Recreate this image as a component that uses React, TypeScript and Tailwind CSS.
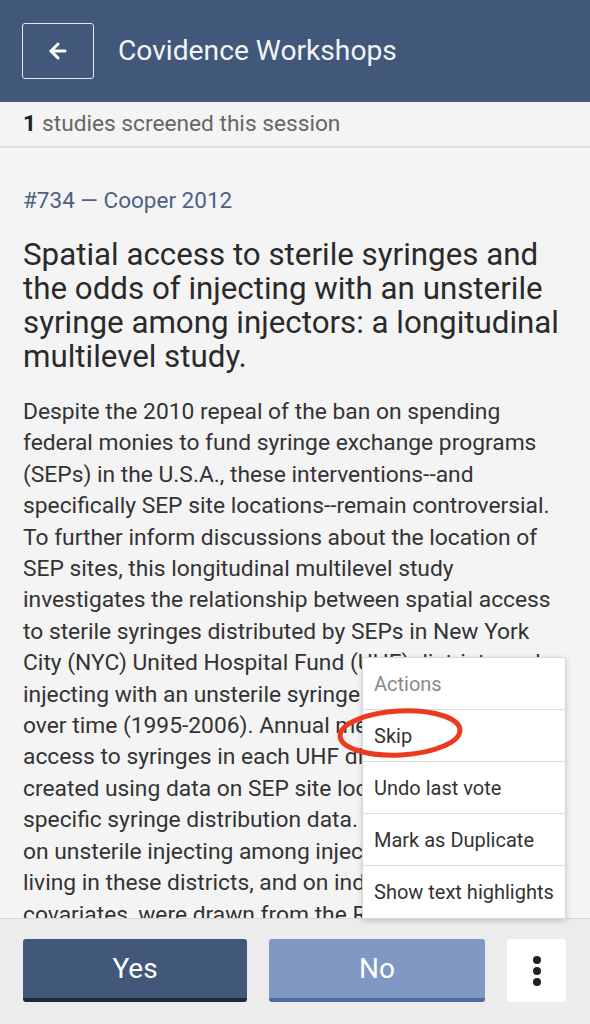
import React from "react";
import { ArrowLeft } from "lucide-react";

const abstractStart =
  "Despite the 2010 repeal of the ban on spending federal monies to fund syringe exchange programs (SEPs) in the U.S.A., these interventions--and specifically SEP site locations--remain controversial. To further inform discussions about the location of SEP sites, this longitudinal multilevel study investigates the relationship between spatial access to sterile syringes distributed by SEPs in New York City (NYC) United Hospital Fund (UHF) districts and injecting with an unsterile syringe among injectors over time (1995-2006). Annual measures of spatial access to syringes in each UHF district were";
const abstractEnd =
  "created using data on SEP site locations and SEP-specific syringe distribution data. Individual-level data on unsterile injecting among injection drug users living in these districts, and on individual-level covariates, were drawn from the Risk Factors study.";

const menuItems = ["Skip", "Undo last vote", "Mark as Duplicate", "Show text highlights"];

function ActionsMenu() {
  return (
    <div className="absolute right-[24px] bottom-[105px] w-[204px] bg-white border border-[#d8d8d8] shadow-[0_2px_6px_rgba(0,0,0,0.18)] z-20">
      <div className="h-[52px] flex items-center px-[11px] text-[20px] text-[#8a8a8a] border-b border-[#dcdcdc] whitespace-nowrap">
        Actions
      </div>
      {menuItems.map((item, i) => (
        <div
          key={item}
          className={
            "h-[52px] flex items-center px-[11px] text-[20px] text-[#333] whitespace-nowrap " +
            (i < menuItems.length - 1 ? "border-b border-[#dcdcdc]" : "")
          }
        >
          {item}
        </div>
      ))}
    </div>
  );
}

function App() {
  return (
    <div
      className="relative h-[1024px] w-full flex flex-col bg-[#f4f4f4] overflow-hidden"
      style={{ fontFamily: "Roboto, 'Liberation Sans', sans-serif" }}
    >
      {/* header */}
      <div className="h-[102px] shrink-0 bg-[#41587a] flex items-center px-[22px] gap-[24px]">
        <button className="w-[72px] h-[56px] border-[1.5px] border-[#e6e9ef] rounded-[3px] flex items-center justify-center text-white">
          <ArrowLeft size={24} strokeWidth={3} />
        </button>
        <h1 className="text-[28.2px] text-[#f2f4f7] font-normal">Covidence Workshops</h1>
      </div>

      {/* session counter */}
      <div className="h-[46px] shrink-0 flex items-center px-[23px] border-b-2 border-[#dedede] text-[22.7px] text-[#666]">
        <span className="font-bold text-[#222] mr-[6px]">1</span>
        studies screened this session
      </div>

      {/* study */}
      <div className="flex-1 overflow-hidden px-[23px] pt-[38px]">
        <p className="text-[22.5px] text-[#4d6283] leading-[28px]">#734 — Cooper 2012</p>
        <h2 className="mt-[24px] text-[31.3px] leading-[34px] text-[#2a2a2a]">
          Spatial access to sterile syringes and the odds of injecting with an unsterile syringe
          among injectors: a longitudinal multilevel study.
        </h2>
        <p className="mt-[22px] text-[22.8px] leading-[31.4px] text-[#333]">
          {abstractStart}
          <br />
          {abstractEnd}
        </p>
      </div>

      {/* vote bar */}
      <div className="h-[106px] shrink-0 bg-[#ececec] border-t border-[#d6d6d6] flex items-start gap-[22px] px-[23px] pt-[20px]">
        <button className="w-[224px] h-[63px] rounded-[3px] bg-[#41587a] border-b-[4px] border-[#1f2a38] text-white text-[28px]">
          Yes
        </button>
        <button className="w-[216px] h-[63px] rounded-[3px] bg-[#7f98c4] border-b-[4px] border-[#4f6aa3] text-white text-[28px]">
          No
        </button>
        <button className="w-[59px] h-[63px] rounded-[3px] bg-white flex flex-col items-center justify-center gap-[3px]">
          <span className="w-[8px] h-[8px] rounded-full bg-[#222]" />
          <span className="w-[8px] h-[8px] rounded-full bg-[#222]" />
          <span className="w-[8px] h-[8px] rounded-full bg-[#222]" />
        </button>
      </div>

      <ActionsMenu />

      {/* red annotation circle */}
      <svg className="absolute left-[334px] top-[700px] z-30" width="134" height="66" viewBox="0 0 134 66">
        <ellipse
          cx="66"
          cy="33"
          rx="60"
          ry="22"
          fill="none"
          stroke="#ec3a1f"
          strokeWidth="5"
          transform="rotate(-3 66 33)"
        />
      </svg>
    </div>
  );
}

export default App;
